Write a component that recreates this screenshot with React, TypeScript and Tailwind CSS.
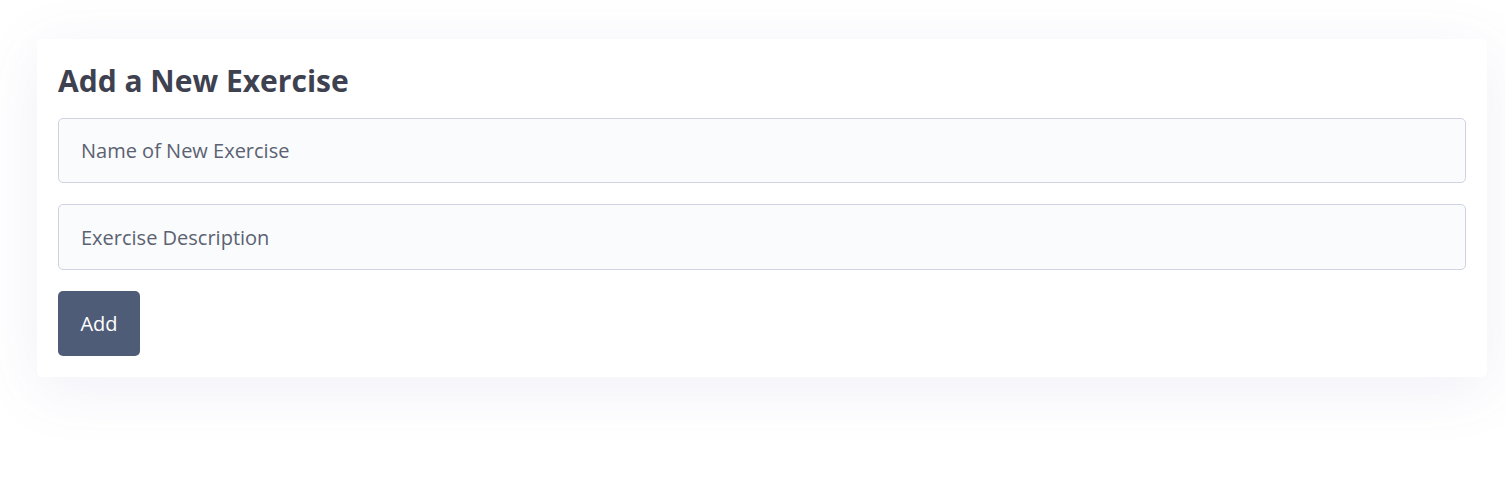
import React from "react";

export default function App() {
  return (
    <div className="min-h-screen bg-white pt-[39px] pl-[37px] pr-[18px] font-['Open_Sans',sans-serif]">
      <div className="bg-white rounded-[5px] px-[21px] pt-[22px] pb-[21px] shadow-[0_12px_60px_rgba(110,110,190,0.10)]">
        <h2 className="text-[30px] font-bold text-[#3e4150] leading-[40px] mb-[17px]">Add a New Exercise</h2>
        <div className="flex flex-col gap-[21px]">
          <input
            type="text"
            placeholder="Name of New Exercise"
            className="h-[65px] w-full rounded-[5px] border border-[#cfd3e3] bg-[#fafbfc] px-[22px] text-[20px] text-[#5b6272] placeholder:text-[#5b6272] outline-none"
          />
          <input
            type="text"
            placeholder="Exercise Description"
            className="h-[66px] w-full rounded-[5px] border border-[#cfd3e3] bg-[#fafbfc] px-[22px] text-[20px] text-[#5b6272] placeholder:text-[#5b6272] outline-none"
          />
          <div>
            <button className="h-[65px] w-[82px] rounded-[5px] bg-[#4f5c78] text-[20px] text-white">Add</button>
          </div>
        </div>
      </div>
    </div>
  );
}
